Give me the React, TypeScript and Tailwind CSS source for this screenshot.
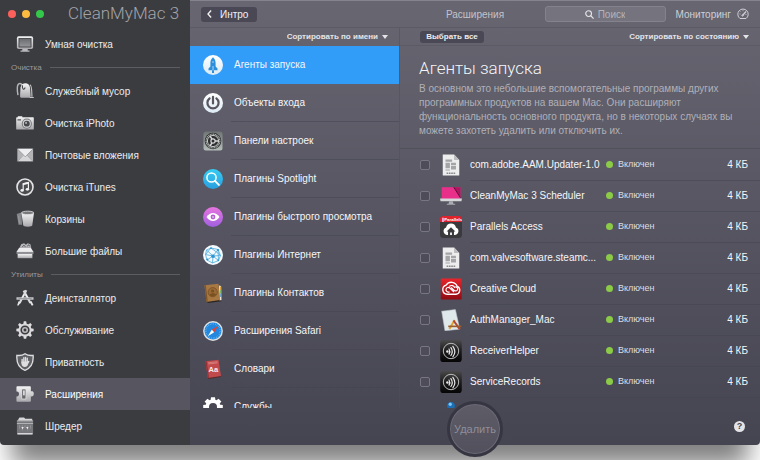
import React, { useState } from 'react';

interface NavItem {
  label: string;
  icon: React.ReactNode;
}

interface Agent {
  name: string;
  icon: React.ReactNode;
}

function Defs() {
  return (
    <svg width="0" height="0" className="absolute" aria-hidden="true">
      <defs>
        <linearGradient id="silver" x1="0" y1="0" x2="0" y2="1">
          <stop offset="0" stopColor="#f4f4f5" />
          <stop offset="1" stopColor="#a9a9ad" />
        </linearGradient>
        <linearGradient id="steel" x1="0" y1="0" x2="0" y2="1">
          <stop offset="0" stopColor="#6b6c70" />
          <stop offset="1" stopColor="#939498" />
        </linearGradient>
        <linearGradient id="white" x1="0" y1="0" x2="0" y2="1">
          <stop offset="0" stopColor="#ffffff" />
          <stop offset="1" stopColor="#dceaf4" />
        </linearGradient>
        <linearGradient id="cyan" x1="0" y1="0" x2="0" y2="1">
          <stop offset="0" stopColor="#35cdf3" />
          <stop offset="1" stopColor="#2a9fe0" />
        </linearGradient>
        <linearGradient id="violet" x1="0" y1="0" x2="0" y2="1">
          <stop offset="0" stopColor="#e875e0" />
          <stop offset="1" stopColor="#a05fe0" />
        </linearGradient>
        <linearGradient id="prefs" x1="0" y1="0" x2="0" y2="1">
          <stop offset="0" stopColor="#6f7573" />
          <stop offset="1" stopColor="#b5bdb9" />
        </linearGradient>
        <linearGradient id="red" x1="0" y1="0" x2="0" y2="1">
          <stop offset="0" stopColor="#e8242b" />
          <stop offset="1" stopColor="#8f0c14" />
        </linearGradient>
        <linearGradient id="black" x1="0" y1="0" x2="0" y2="1">
          <stop offset="0" stopColor="#4a4a4a" />
          <stop offset="0.5" stopColor="#1c1c1c" />
          <stop offset="1" stopColor="#050505" />
        </linearGradient>
      </defs>
    </svg>
  );
}

function Glyph({ children, size = 'size-[18px]' }: { children: React.ReactNode; size?: string }) {
  return (
    <svg viewBox="0 0 20 20" className={`${size} shrink-0`} fill="none" aria-hidden="true">
      {children}
    </svg>
  );
}

const displayIcon = (
  <Glyph>
    <rect x="1" y="1.5" width="18" height="14" rx="2" fill="url(#silver)" />
    <rect x="2.8" y="3.2" width="14.4" height="10.6" rx="0.8" fill="#46474b" />
    <rect x="3.8" y="4.2" width="12.4" height="8.6" fill="url(#steel)" />
    <path d="M7 15.5h6v1.8h2v1.4H5v-1.4h2z" fill="#b9b9bc" />
  </Glyph>
);

const vacuumIcon = (
  <Glyph>
    <path d="M2.2 14.5C1.2 9 .6 2 4.200 1.600c2-.1 2.600 1.400 3 3" stroke="#b5b5b8" strokeWidth="1.6" />
    <path d="M5 6c1-3.500 3-4.500 5.500-4.500S15 3 15.500 6l.8 9.500c0 1.500-.8 2-2 2H6.500c-1.500 0-2-.8-2-2z" fill="url(#silver)" />
    <path d="M7 3.500c0 5 1.500 6 3.200 2.500" stroke="#46474b" strokeWidth="1.3" />
    <path d="M15.500 3c2.300 1 2 8 2.200 13.500M15.200 17.200h4.600" stroke="#c5c5c8" strokeWidth="1.300" />
  </Glyph>
);

const cameraIcon = (
  <Glyph>
    <path d="M2 2.500h5v1.200H19a.8.8 0 0 1 .8.800v11.800a1 1 0 0 1-1 1H1.200a1 1 0 0 1-1-1V4.500a.8.8 0 0 1 .8-.8h1z" fill="url(#silver)" />
    <rect x="1.600" y="5.600" width="4" height="1.800" fill="#77787c" />
    <circle cx="12" cy="10.700" r="5.600" fill="#75767a" />
    <circle cx="12" cy="10.700" r="4.500" fill="#d4d4d6" />
    <circle cx="12" cy="10.700" r="3.300" fill="#47484c" />
    <circle cx="11.200" cy="9.900" r="1.200" fill="#a9a9ad" />
  </Glyph>
);

const mailIcon = (
  <Glyph>
    <rect x="1.500" y="3" width="17.500" height="14" rx="0.8" fill="#b4b4b7" />
    <path d="M1.500 17 8 9.500h4.500L19 17z" fill="#d6d6d8" />
    <path d="M1.500 3H19l-8.700 9z" fill="#eeeef0" />
    <path d="M1.500 3.200 10.300 12 19 3.200M1.800 17 8 10.300M18.700 17l-6.200-6.700" stroke="#8d8d91" strokeWidth="0.8" />
  </Glyph>
);

const itunesIcon = (
  <Glyph>
    <circle cx="10" cy="10" r="8.900" fill="#4c4d51" stroke="#e4e4e6" strokeWidth="1.800" />
    <path d="M8 13.600V6.400l5.800-1.300v7.400" stroke="#f2f2f3" strokeWidth="1.300" />
    <path d="M7.600 5.900 14.200 4.500v2L7.600 8z" fill="#f2f2f3" />
    <ellipse cx="6.800" cy="13.800" rx="1.900" ry="1.500" fill="#f2f2f3" />
    <ellipse cx="12.700" cy="12.600" rx="1.900" ry="1.500" fill="#f2f2f3" />
  </Glyph>
);

const binsIcon = (
  <Glyph>
    <path d="M0.800 4.500 6 2.800l.8 13.700H2.800z" fill="#85868a" />
    <path d="M2.800 6.500 4 15" stroke="#a5a5a9" strokeWidth="0.800" />
    <path d="M6 3h14l-1.900 14c-.2 1-1.600 1.500-5 1.500s-4.900-.5-5.100-1.500z" fill="url(#silver)" />
    <ellipse cx="13" cy="3.200" rx="6.900" ry="1.900" fill="#77787c" stroke="#e2e2e4" strokeWidth="0.900" />
  </Glyph>
);

const boxIcon = (
  <Glyph>
    <path d="M4 6.500 5.800 2.500 9 1.500l2 1.500 2-1.500 3 1 1 4z" fill="#b9b9bc" />
    <path d="M7 5.500 8.800 3.500l1.700 2M12.500 5l1.500-2 1.500 2" stroke="#55565a" strokeWidth="1" />
    <path d="M3.500 6.500h13l3 4.500H.5z" fill="#ececee" />
    <path d="M.5 11h19v2.200H.5z" fill="#8f9094" />
    <path d="M1.800 13.200h16.400V18H1.800z" fill="url(#silver)" />
  </Glyph>
);

const appsIcon = (
  <Glyph>
    <path d="M11.500 1.500 4 15.500M8.500 1.800 16 15.500" stroke="#d9d9db" strokeWidth="2.400" />
    <path d="M.5 9.200h19v2.800H.5z" fill="#c4c4c7" />
    <path d="M2.500 10.600h15" stroke="#85868a" strokeWidth="0.700" />
    <path d="M2.800 13.500 5.300 15l-2.800 3.700-1.200-.6zM15 14.500l2.200-1.200 2.200 4.500-1.800.9z" fill="#e6e6e8" />
    <path d="m7.200 9.500 1.600-3M11 6l1.800 3.400" stroke="#fafafa" strokeWidth="1" />
  </Glyph>
);

const gearTeeth = [0, 45, 90, 135, 180, 225, 270, 315];

const gearIcon = (
  <Glyph>
    {gearTeeth.map(a => (
      <path key={a} d="M8 4 8.700.4h2.600L12 4z" fill="#dedee0" transform={`rotate(${a} 10 10)`} />
    ))}
    <circle cx="10" cy="10" r="6.200" stroke="#d9d9db" strokeWidth="2.200" />
    <circle cx="10" cy="10" r="2.500" stroke="#b9b9bc" strokeWidth="1.800" />
  </Glyph>
);

const shieldIcon = (
  <Glyph>
    <path d="M10 .8c2.500 1.700 5.500 2.200 9 1.800.7 8-1.500 13.500-9 16.700C2.500 16.100.3 10.600 1 2.600c3.500.4 6.500-.1 9-1.800z" fill="#606165" stroke="#dcdcde" strokeWidth="1.500" />
    <path d="M6.800 7v4M8.700 5.300V11M10.600 4.800V11M12.500 5.800V11M14.200 9.300 12.800 12" stroke="#dedee0" strokeWidth="1.500" strokeLinecap="round" />
    <path d="M6.100 9.500h7.200v2.800c0 2-1.300 3.200-3.500 3.200s-3.700-1.500-3.700-3.500z" fill="#dedee0" />
  </Glyph>
);

const extensionIcon = (
  <Glyph>
    <path d="M1.500 1.500h14a1 1 0 0 1 1 1v4.700c.8-.5 3.300-.5 3.300 2.600s-2.500 3.300-3.300 2.800v4.900a1 1 0 0 1-1 1h-14a1 1 0 0 1-1-1v-4.800c3.800.8 3.800-6.200 0-5.400V2.500a1 1 0 0 1 1-1z" fill="url(#silver)" />
    <rect x="6.500" y="4.500" width="4.500" height="11" fill="#66676b" stroke="#f5f5f6" strokeWidth="0.600" />
    <rect x="7.800" y="6" width="2" height="5.500" fill="#d9d9db" />
  </Glyph>
);

const shredderIcon = (
  <Glyph>
    <path d="M2.500 2.500 4 .5h5l1.200 1.500H18V6H2.500z" fill="#d6d6d8" />
    <path d="M1 4h18v13l-1 2.500H2L1 17z" fill="#76777b" />
    <path d="M1 4.300h18M1 7.200h18" stroke="#c2c2c5" strokeWidth="0.900" />
    <path d="M4 9v4M7 9v6M10 9v3M13 9v6M16 9v4" stroke="#97979b" strokeWidth="0.900" />
    <path d="M6 11h2.600l-1.300 2.600zM11.300 11h2.600l-1.300 2.600z" fill="#f2f2f3" />
    <path d="M1.500 17.700h17v1.800h-17z" fill="#d6d6d9" />
  </Glyph>
);

const rocketIcon = (
  <Glyph size="size-5">
    <circle cx="10" cy="10" r="10" fill="url(#white)" />
    <path d="M10 2.200c2 1.800 2.600 3.800 2.600 6v3.200l1.900 2v1.800h-9v-1.800l1.900-2V8.200c0-2.200.6-4.200 2.600-6z" fill="#2c8fdb" />
    <path d="M9 15.200h2V18H9z" fill="#2c8fdb" />
    <circle cx="10" cy="7" r="0.800" fill="#bfe0f7" />
    <path d="M10 11v4" stroke="#eaf5fd" strokeWidth="0.700" />
  </Glyph>
);

const powerIcon = (
  <Glyph size="size-5">
    <circle cx="10" cy="10" r="10" fill="url(#white)" />
    <path d="M6.600 5.400a5.600 5.600 0 1 0 6.800 0" stroke="#565560" strokeWidth="2.200" strokeLinecap="round" />
    <path d="M10 3.800v6.600" stroke="#565560" strokeWidth="2.200" strokeLinecap="round" />
  </Glyph>
);

const prefsIcon = (
  <Glyph size="size-5">
    <rect x="0.500" y="0.500" width="19" height="19" rx="2.500" fill="url(#prefs)" />
    <circle cx="10" cy="10" r="8.300" fill="#2d2f30" />
    <circle cx="10" cy="10" r="6.900" stroke="#b9bdbb" strokeWidth="1.100" strokeDasharray="1.200 0.500" />
    <circle cx="10" cy="10" r="5.600" stroke="#d5d8d6" strokeWidth="0.900" />
    <circle cx="10" cy="10" r="2.100" stroke="#d5d8d6" strokeWidth="1.200" />
    <path d="M12 10h4M9 11.800 7 15M9 8.200 7 5" stroke="#d5d8d6" strokeWidth="1.500" />
  </Glyph>
);

const spotlightIcon = (
  <Glyph size="size-5">
    <circle cx="10" cy="10" r="10" fill="url(#cyan)" />
    <circle cx="8.500" cy="8.500" r="4.600" stroke="#fff" strokeWidth="1.500" />
    <path d="m11.900 11.900 4 4" stroke="#fff" strokeWidth="1.900" strokeLinecap="round" />
  </Glyph>
);

const eyeIcon = (
  <Glyph size="size-5">
    <circle cx="10" cy="10" r="10" fill="url(#violet)" />
    <path d="M3.500 10c3.500-5.400 9.500-5.400 13 0-3.500 5.400-9.500 5.400-13 0z" fill="#fff" />
    <circle cx="10" cy="10" r="2.400" fill="#b45fd0" />
    <circle cx="10" cy="10" r="0.900" fill="#e6c4f2" />
  </Glyph>
);

const internetIcon = (
  <Glyph size="size-5">
    <circle cx="10" cy="10" r="10" fill="#f4fafe" />
    <path d="M3.500 5 8 3l7 1.500 2.500 6-2 5L9.500 18 4 15l-1.500-5.500zM3.500 5l6.500 6 5-6.500M10 11l7.500-.5M10 11l-.5 7M10 11 2.500 9.500M10 11 4 15M8 3 2.500 9.500M15 4.500l.5 11M8 3c4 3 7 5 9.500 7.500M10 11l5.500 4.500" stroke="#4aa9dc" strokeWidth="0.800" />
    <circle cx="10" cy="11.300" r="1.700" fill="#2b93d1" />
    <circle cx="15" cy="5" r="1" fill="#2b93d1" />
    <circle cx="4.300" cy="14.500" r="1" fill="#2b93d1" />
    <circle cx="8" cy="3.200" r="0.900" fill="#2b93d1" />
    <circle cx="15.300" cy="15.300" r="0.900" fill="#2b93d1" />
  </Glyph>
);

const contactsIcon = (
  <Glyph size="size-5">
    <path d="m3 18 13.500-2 2 2.200L5 20z" fill="#2b2620" />
    <path d="m16 2.500 2 .5.500 14-2 .5z" fill="#e9e4d8" />
    <path d="M17 3.500h1.300V7H17z" fill="#d9a33c" />
    <path d="M17.200 7h1.300v3.500h-1.300z" fill="#67b04b" />
    <path d="M17.300 10.500h1.300V14h-1.300z" fill="#3e91c8" />
    <path d="M1.500 2.200 15.500.8 17 17 3.500 19z" fill="#a87843" />
    <path d="m1.500 2.200 1.300-.1L4.800 18.800l-1.300.2z" fill="#7f5629" />
    <circle cx="9.700" cy="9.200" r="4.600" fill="#986a38" stroke="#7d5426" strokeWidth="0.900" />
    <circle cx="9.600" cy="8" r="1.600" fill="#79501f" />
    <path d="M6.500 12c1.300-2 5-2.200 6.600-.4-1.700 2.200-5 2.400-6.600.4z" fill="#79501f" />
  </Glyph>
);

const safariIcon = (
  <Glyph size="size-5">
    <circle cx="10" cy="10" r="9.900" fill="#dfe3e6" />
    <circle cx="10" cy="10" r="8.500" fill="#2187df" />
    <circle cx="10" cy="10" r="7.200" stroke="#8cc9f5" strokeWidth="1.300" strokeDasharray="0.500 1.300" />
    <path d="M15.200 4.800 11.200 11.200 8.800 8.800z" fill="#e8402f" />
    <path d="M4.800 15.200 8.800 8.800l2.400 2.400z" fill="#fff" />
  </Glyph>
);

const dictionaryIcon = (
  <Glyph size="size-5">
    <path d="m4.500 18.500 13-2 .5 1.500L5.500 20z" fill="#5a2a2b" />
    <path d="M2.500 2.200 15.500.8 18 17 4.800 19z" fill="#c14a4c" />
    <path d="m2.500 2.200 1.200-.1L6 18.800l-1.200.2z" fill="#963133" />
    <path d="m5 3.800 9.500-1.100M5.300 5l9.400-1.100" stroke="#e59a98" strokeWidth="0.600" />
    <text x="5.500" y="13" fontSize="7.500" fontWeight="700" fontFamily="Liberation Sans, sans-serif" fill="#fbe9e8">Aa</text>
  </Glyph>
);

const servicesIcon = (
  <Glyph size="size-5">
    {gearTeeth.map(a => (
      <path key={a} d="M7.500 4 8 .2h4l.5 3.800z" fill="#fff" transform={`rotate(${a} 10 10)`} />
    ))}
    <circle cx="10" cy="10" r="5.800" stroke="#fff" strokeWidth="3.600" />
  </Glyph>
);

const plistIcon = (
  <Glyph size="size-[22px]">
    <path d="M2.500.5h10.300L17.500 5.500v14h-15z" fill="#ededee" />
    <path d="M12.800.5 17.500 5.500h-4.700z" fill="#bcbcbf" />
    <path d="M5 5h6v2H5zM5 8h4v5H5zM10 8h4.500v2.200H10zM10 11h4.500v3H10zM5 14h4v1H5z" fill="#a4a4a7" />
    <path d="M6 17.500h8" stroke="#88888c" strokeWidth="1.300" strokeDasharray="1.500 0.600" />
  </Glyph>
);

const cleanMyMacIcon = (
  <Glyph size="size-[22px]">
    <path d="M1.500 2h17v12h-17z" fill="#e8308a" />
    <path d="m12.500 2 6 9V2z" fill="#b01560" />
    <path d="m12.500 2 6 9.500" stroke="#5a0f35" strokeWidth="0.900" />
    <path d="M0 12.300h20l-.5 2.500H.5z" fill="#d4d6d8" />
    <path d="M8.300 14.800h3.400l.5 2.200h1.600v1H6.200v-1h1.600z" fill="#a9acb0" />
  </Glyph>
);

const parallelsIcon = (
  <Glyph size="size-[22px]">
    <rect x="0" y="0" width="20" height="20" rx="3.500" fill="#3a393b" />
    <path d="M3 0h14a3 3 0 0 1 3 3v2.500H0V3a3 3 0 0 1 3-3z" fill="#e0232c" />
    <text x="2" y="4.300" fontSize="4" fontWeight="700" fontFamily="Liberation Sans, sans-serif" fill="#fff">∥Parallels</text>
    <path d="M6.300 17.300a3.600 3.600 0 0 1-.8-6.900 4.600 4.600 0 0 1 9 0 3.600 3.600 0 0 1-.8 6.900z" fill="#fff" />
    <path d="M10 10.300 14 14h-1.300v3.300h-1.900V15H9.200v2.300H7.300V14H6z" fill="#3a393b" />
  </Glyph>
);

const creativeCloudIcon = (
  <Glyph size="size-[22px]">
    <rect x="0.700" y="0.500" width="19" height="19" rx="0.800" fill="url(#red)" />
    <path d="M6.500 14.800a4.300 4.300 0 0 1-.9-8.400 5.700 5.700 0 0 1 10.100 1.300 3.700 3.700 0 0 1-1.200 7.100z" stroke="#fff" strokeWidth="1.200" />
    <path d="m12.700 12.700-3.700-3.500a2.100 2.100 0 1 0-1.500 3.600h1.200M8.500 7.700a3 3 0 0 1 5 1.300M10 8.500l2.700 2.600a1.900 1.900 0 1 0 1.200-3.100" stroke="#fff" strokeWidth="1.100" />
  </Glyph>
);

const authManagerIcon = (
  <Glyph size="size-[22px]">
    <path d="M1.500 2 14 .5l4 17.800-13.500 1.500z" fill="#dfe9ec" stroke="#b5c2c8" strokeWidth="0.500" />
    <path d="M8.500 18.200 13.300 10" stroke="#e0a431" strokeWidth="1.800" />
    <path d="M12.300 10.500 18 18.500" stroke="#b3452f" strokeWidth="1.800" />
    <path d="M7.500 15.800h12" stroke="#9d5a2a" strokeWidth="1.500" />
  </Glyph>
);

const receiverIcon = (
  <Glyph size="size-[22px]">
    <rect x="0.200" y="0" width="19.600" height="20" rx="2.800" fill="url(#black)" />
    <circle cx="10" cy="10" r="7" stroke="#bdbdbd" strokeWidth="0.900" />
    <circle cx="6.700" cy="10.500" r="1.100" fill="#e6e6e6" />
    <path d="M8.200 8.200c.9 1.400.9 3.200 0 4.600M9.900 6.900c1.500 2.200 1.500 5 0 7.200M11.700 5.700c2.200 3 2.200 6.600 0 9.600" stroke="#e6e6e6" strokeWidth="1.100" strokeLinecap="round" />
  </Glyph>
);

const blueBallIcon = (
  <Glyph size="size-[22px]">
    <circle cx="10" cy="8" r="3.500" fill="#1c6fb5" />
    <circle cx="9.300" cy="6.600" r="1.500" fill="#7fc4f2" />
  </Glyph>
);

const cleaning: NavItem[] = [
  { label: 'Служебный мусор', icon: vacuumIcon },
  { label: 'Очистка iPhoto', icon: cameraIcon },
  { label: 'Почтовые вложения', icon: mailIcon },
  { label: 'Очистка iTunes', icon: itunesIcon },
  { label: 'Корзины', icon: binsIcon },
  { label: 'Большие файлы', icon: boxIcon }
];

const utilities: NavItem[] = [
  { label: 'Деинсталлятор', icon: appsIcon },
  { label: 'Обслуживание', icon: gearIcon },
  { label: 'Приватность', icon: shieldIcon },
  { label: 'Расширения', icon: extensionIcon },
  { label: 'Шредер', icon: shredderIcon }
];

const categories: NavItem[] = [
  { label: 'Агенты запуска', icon: rocketIcon },
  { label: 'Объекты входа', icon: powerIcon },
  { label: 'Панели настроек', icon: prefsIcon },
  { label: 'Плагины Spotlight', icon: spotlightIcon },
  { label: 'Плагины быстрого просмотра', icon: eyeIcon },
  { label: 'Плагины Интернет', icon: internetIcon },
  { label: 'Плагины Контактов', icon: contactsIcon },
  { label: 'Расширения Safari', icon: safariIcon },
  { label: 'Словари', icon: dictionaryIcon },
  { label: 'Службы', icon: servicesIcon }
];

const agents: Agent[] = [
  { name: 'com.adobe.AAM.Updater-1.0', icon: plistIcon },
  { name: 'CleanMyMac 3 Scheduler', icon: cleanMyMacIcon },
  { name: 'Parallels Access', icon: parallelsIcon },
  { name: 'com.valvesoftware.steamc...', icon: plistIcon },
  { name: 'Creative Cloud', icon: creativeCloudIcon },
  { name: 'AuthManager_Mac', icon: authManagerIcon },
  { name: 'ReceiverHelper', icon: receiverIcon },
  { name: 'ServiceRecords', icon: receiverIcon }
];

function SidebarItem({ item, active, onSelect }: { item: NavItem; active: boolean; onSelect: (label: string) => void }) {
  return (
    <button
      type="button"
      onClick={() => onSelect(item.label)}
      className={`flex h-8 w-full items-center gap-[11px] pl-4 text-left text-[10px] ${
        active ? 'bg-[#575660] text-white' : 'text-[#ececee]'
      }`}
    >
      {item.icon}
      {item.label}
    </button>
  );
}

function SectionTitle({ children }: { children: React.ReactNode }) {
  return (
    <h2 className="flex h-[15px] items-center gap-2 pr-2.5 pl-[11px] text-[8px] text-[#98999e]">
      {children}
      <span className="h-px flex-1 bg-[#5c5d62]" />
    </h2>
  );
}

function SortSelect({ label, value }: { label: string; value: string }) {
  return (
    <label className="flex items-center gap-1 text-[8px] font-bold text-[#e4e4e8]">
      <select aria-label={label} className="field-sizing-content appearance-none bg-transparent outline-none">
        <option>{value}</option>
      </select>
      <svg viewBox="0 0 6 4" className="h-1 w-1.5" fill="currentColor" aria-hidden="true">
        <path d="M0 0h6L3 4z" />
      </svg>
    </label>
  );
}

export default function App() {
  const [section, setSection] = useState('Расширения');
  const [category, setCategory] = useState('Агенты запуска');
  const [checked, setChecked] = useState<string[]>([]);

  const toggle = (name: string) => {
    setChecked(checked.includes(name) ? checked.filter(n => n !== name) : [...checked, name]);
  };

  return (
    <div className="flex h-screen flex-col overflow-hidden bg-white pb-[15px] font-['Liberation_Sans',Arial,sans-serif]">
      <Defs />
      <div className="relative flex min-h-0 flex-1 rounded-b-sm shadow-[0_32px_24px_-12px_rgba(0,0,0,0.5)]">
        {/* Sidebar */}
        <aside className="w-[190px] shrink-0 overflow-hidden rounded-bl-sm bg-[#3b3c40]">
          <header className="flex h-7 items-center pl-2">
            <div className="flex gap-1.5">
              <span className="size-2 rounded-full bg-[#fc605c]" />
              <span className="size-2 rounded-full bg-[#fdbc40]" />
              <span className="size-2 rounded-full bg-[#34c84a]" />
            </div>
            <h1 className="ml-6 font-['Roboto',sans-serif] text-[17px] font-light whitespace-nowrap text-[#a3a3a8]">CleanMyMac 3</h1>
          </header>
          <nav>
            <SidebarItem item={{ label: 'Умная очистка', icon: displayIcon }} active={section === 'Умная очистка'} onSelect={setSection} />
            <SectionTitle>Очистка</SectionTitle>
            {cleaning.map(item => (
              <SidebarItem key={item.label} item={item} active={item.label === section} onSelect={setSection} />
            ))}
            <SectionTitle>Утилиты</SectionTitle>
            {utilities.map(item => (
              <SidebarItem key={item.label} item={item} active={item.label === section} onSelect={setSection} />
            ))}
          </nav>
        </aside>

        <main className="relative flex min-w-0 flex-1 flex-col rounded-br-sm bg-linear-to-b from-[#676671] to-[#454451]">
          {/* Toolbar */}
          <div className="grid h-7 shrink-0 grid-cols-[1fr_auto_1fr] items-center border-t border-t-[#85848e] border-b border-b-[#5b5a65] px-[11px] text-[10px]">
            <button type="button" className="flex h-[15px] w-14 items-center gap-2 rounded-[3px] bg-[#494854] pl-1.5 text-[#f1f1f4]">
              <svg viewBox="0 0 5 9" className="h-2 w-[5px]" fill="none" stroke="currentColor" strokeWidth="1.500" aria-hidden="true">
                <path d="M4.300.5.8 4.500l3.500 4" />
              </svg>
              Интро
            </button>
            <p className="text-[#c3c3ca]">Расширения</p>
            <div className="flex items-center justify-end gap-2.5">
              <label className="flex h-4 w-[121px] items-center justify-center gap-1 rounded-[3px] border border-[#83828d] bg-[#74737e]">
                <svg viewBox="0 0 10 10" className="size-[9px]" fill="none" stroke="#e4e4e8" strokeWidth="1.300" aria-hidden="true">
                  <circle cx="4" cy="4" r="3.200" />
                  <path d="m6.400 6.400 3.100 3.100" />
                </svg>
                <input type="search" placeholder="Поиск" className="field-sizing-content bg-transparent outline-none placeholder:text-[#b4b4bb]" />
              </label>
              <button type="button" className="flex items-center gap-1.5 text-[#cfcfd5]">
                Мониторинг
                <svg viewBox="0 0 12 12" className="size-3" fill="none" stroke="currentColor" aria-hidden="true">
                  <path d="M3 10.500a5.200 5.200 0 1 1 6 0z" />
                  <path d="M5.500 7.500 9 3.500" strokeWidth="1.300" />
                  <path d="M2.500 6h1M3.500 3.500l.6.600M6 2.200v1M8.500 6.500h1" strokeWidth="0.800" />
                  <circle cx="5.500" cy="7.500" r="0.700" />
                </svg>
              </button>
            </div>
          </div>

          <div className="flex min-h-0 flex-1">
            {/* Categories */}
            <section className="flex w-[210px] shrink-0 flex-col overflow-hidden border-r border-[#4f4e5a]/50">
              <div className="flex h-[18px] shrink-0 items-center justify-end pr-[11px]">
                <SortSelect label="Сортировка категорий" value="Сортировать по имени" />
              </div>
              <ul>
                {categories.map(item => (
                  <li key={item.label}>
                    <button
                      type="button"
                      onClick={() => setCategory(item.label)}
                      className={`flex h-[38px] w-full items-center pl-[13px] text-left text-[10px] text-[#f6f6f8] ${
                        item.label === category ? 'bg-[#329df8]' : ''
                      }`}
                    >
                      {item.icon}
                      <span
                        className={`ml-2 flex h-full flex-1 items-center border-b pl-[3px] whitespace-nowrap ${
                          item.label === category ? 'border-transparent' : 'border-[#44434f]/50'
                        }`}
                      >
                        {item.label}
                      </span>
                    </button>
                  </li>
                ))}
              </ul>
            </section>

            {/* Launch agents */}
            <section className="flex min-w-0 flex-1 flex-col overflow-hidden">
              <div className="flex h-[18px] shrink-0 items-center justify-between border-b border-[#5b5a65] pr-[11px] pl-5">
                <button type="button" className="h-3 w-16 rounded-[3px] bg-[#494854] text-[8px] leading-3 font-bold text-[#ececf0]">
                  Выбрать все
                </button>
                <SortSelect label="Сортировка объектов" value="Сортировать по состоянию" />
              </div>
              <header className="h-[103px] shrink-0 border-b border-[#4b4a56]/60 pt-2 pl-[19px]">
                <h2 className="font-['Roboto',sans-serif] text-[17px] leading-7 font-light text-[#f6f6f8]">Агенты запуска</h2>
                <p className="w-[325px] text-[10px] leading-[14px] text-[#b0b0b8]">
                  В основном это небольшие вспомогательные программы других программных продуктов на вашем Mac. Они расширяют
                  функциональность основного продукта, но в некоторых случаях вы можете захотеть удалить или отключить их.
                </p>
              </header>
              <table className="w-full table-fixed text-left text-[10px] text-[#f6f6f8]">
                <tbody>
                  {agents.map(agent => (
                    <tr key={agent.name} className="h-[31px]">
                      <td className="w-10 pl-5">
                        <input
                          type="checkbox"
                          aria-label={agent.name}
                          checked={checked.includes(agent.name)}
                          onChange={() => toggle(agent.name)}
                          className="block size-2.5 appearance-none rounded-[2px] border border-[#777681] bg-[#4d4c58] checked:bg-[#329df8]"
                        />
                      </td>
                      <td className="w-[30px]">{agent.icon}</td>
                      <td className="truncate border-b border-[#44434f]/50">{agent.name}</td>
                      <td className="w-[92px] border-b border-[#44434f]/50 text-[9px] text-[#dedee3]">
                        <span className="flex items-center gap-[5px]">
                          <span className="size-[7px] rounded-full bg-[#8ccb47]" />
                          Включен
                        </span>
                      </td>
                      <td className="w-[62px] border-b border-[#44434f]/50 pr-3 text-right">4 КБ</td>
                    </tr>
                  ))}
                  <tr>
                    <td />
                    <td>{blueBallIcon}</td>
                  </tr>
                </tbody>
              </table>
            </section>
          </div>

          <footer className="flex h-[37px] shrink-0 items-center justify-end pr-[15px]">
            <button type="button" className="flex size-[11px] items-center justify-center rounded-full bg-[#e4e4e8] text-[9px] font-bold text-[#454451]">
              ?
            </button>
          </footer>

          <button
            type="button"
            className="absolute -bottom-3 left-1/2 flex size-14 -translate-x-1/2 items-center justify-center rounded-full border-[3px] border-[#363542] bg-linear-to-b from-[#5d5c67] to-[#51505c] text-[11px] text-[#8f8e99] shadow-[inset_0_0_0_1px_#6c6b76]"
          >
            Удалить
          </button>
        </main>
      </div>
    </div>
  );
}
